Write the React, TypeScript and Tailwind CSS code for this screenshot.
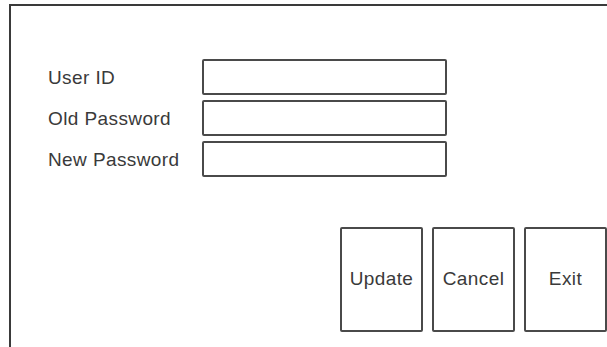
export default function App() {
  const fields = ['User ID', 'Old Password', 'New Password'];
  const buttons = ['Update', 'Cancel', 'Exit'];

  return (
    <div
      className="w-[607px] h-[347px] bg-white overflow-hidden text-[#3a3a3a]"
      style={{ fontFamily: '"Liberation Sans", Arial, sans-serif' }}
    >
      <div className="ml-[9px] mt-[4px] h-[343px] border-l-2 border-t-2 border-[#3a3a3a] flex flex-col">
        <div className="pt-[53px] pl-[37px] flex flex-col gap-[5px]">
          {fields.map(f => (
            <div key={f} className="flex items-center">
              <span className="w-[154px] text-[19px] tracking-[0.4px] leading-none">{f}</span>
              <div className="w-[245px] h-[36px] border-2 border-[#4a4a4a] rounded-[2px] bg-white" />
            </div>
          ))}
        </div>
        <div className="mt-[50px] flex justify-end gap-[9px]">
          {buttons.map(b => (
            <div
              key={b}
              className="w-[83px] h-[105px] border-2 border-[#4a4a4a] rounded-[2px] flex items-center justify-center text-[19px] tracking-[0.4px]"
            >
              {b}
            </div>
          ))}
        </div>
      </div>
    </div>
  );
}
